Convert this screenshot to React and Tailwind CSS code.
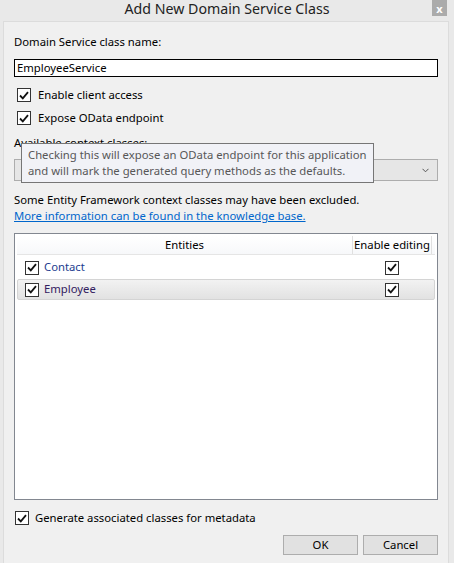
import React from 'react';

const font = { fontFamily: '"Noto Sans", "Open Sans", sans-serif' };

const Check = ({ className = '' }) => (
  <span
    className={`flex h-[14px] w-[14px] shrink-0 items-center justify-center border border-[#333] bg-white ${className}`}
  >
    <svg width="10" height="9" viewBox="0 0 10 9">
      <path d="M1 4.5 L3.8 7.3 L9 1.2" fill="none" stroke="#111" strokeWidth="1.8" />
    </svg>
  </span>
);

const App = () => {
  return (
    <div
      className="relative flex h-[563px] w-[454px] flex-col overflow-hidden whitespace-nowrap bg-[#e9e9e9] text-[11.3px] text-black"
      style={font}
    >
      {/* title bar */}
      <div className="flex h-[21px] shrink-0 justify-center pt-[1px] text-[14.2px] leading-[15px] text-[#222]">
        Add New Domain Service Class
      </div>
      <div className="absolute left-[432px] top-0 flex h-[16px] w-[15px] items-center justify-center bg-[#ababab] text-[11px] font-bold leading-none text-white">
        x
      </div>

      {/* body */}
      <div className="ml-[3px] mr-[5px] flex flex-1 flex-col border-l border-t border-r border-[#dcdcdc] bg-[#f0f0f0] pl-[10px] pr-[10px]">
        <div className="mt-[12px] leading-[16px]">Domain Service class name:</div>
        <div className="mt-[9px] flex h-[18px] items-center border border-black bg-white pl-[2px] leading-none">
          EmployeeService
        </div>

        <div className="mt-[11px] flex items-center gap-[7px] pl-[3px] leading-[14px]">
          <Check />
          <span>Enable client access</span>
        </div>
        <div className="mt-[9px] flex items-center gap-[7px] pl-[3px] leading-[14px]">
          <Check />
          <span>Expose OData endpoint</span>
        </div>

        <div className="relative mt-[11px]">
          <div className="leading-[14px]">Available context classes:</div>
          <div className="mt-[9px] flex h-[22px] items-center justify-end border border-[#adadad] bg-[#e6e6e6] pr-[8px]">
            <svg width="7" height="5" viewBox="0 0 7 5">
              <path d="M0.5 0.8 L3.5 3.8 L6.5 0.8" fill="none" stroke="#555" strokeWidth="1" />
            </svg>
          </div>
          <div className="absolute left-[7px] top-[7px] w-[353px] border border-[#767676] bg-[#f1f2f7] px-[6px] py-[3px] leading-[16px] text-[#575757]">
            <div>Checking this will expose an OData endpoint for this application</div>
            <div>and will mark the generated query methods as the defaults.</div>
          </div>
        </div>

        <div className="mt-[11px] leading-[16px]">
          Some Entity Framework context classes may have been excluded.
        </div>
        <div className="leading-[16px] text-[#0066cc] underline">
          More information can be found in the knowledge base.
        </div>

        {/* entity grid */}
        <div className="mt-[9px] flex h-[267px] flex-col border border-[#828790] bg-white p-[2px]">
          <div className="flex h-[19px] items-stretch border-b border-[#e5e5e5] bg-gradient-to-b from-white to-[#f7f8fa]">
            <div className="flex flex-1 items-center justify-center">Entities</div>
            <div className="flex w-[80px] items-center justify-center border-l border-r border-[#e0e0e0]">
              Enable editing
            </div>
            <div className="w-[3px]" />
          </div>
          <div className="mt-[2px] flex h-[21px] items-center">
            <div className="flex flex-1 items-center gap-[5px] pl-[8px] text-[#1e3d8f]">
              <Check />
              <span>Contact</span>
            </div>
            <div className="flex w-[80px] items-center justify-center">
              <Check />
            </div>
            <div className="w-[3px]" />
          </div>
          <div className="mt-[1px] flex h-[21px] items-center rounded-[2px] border border-[#d4d4d4] bg-gradient-to-b from-[#f2f2f2] to-[#e2e2e2]">
            <div className="flex flex-1 items-center gap-[5px] pl-[7px] text-[#32205f]">
              <Check />
              <span>Employee</span>
            </div>
            <div className="flex w-[80px] items-center justify-center">
              <Check />
            </div>
            <div className="w-[2px]" />
          </div>
        </div>

        <div className="mt-[11px] flex items-center gap-[6px] pl-[1px] leading-[14px]">
          <Check />
          <span>Generate associated classes for metadata</span>
        </div>

        <div className="mt-[10px] flex justify-end gap-[5px]">
          <button className="h-[20px] w-[75px] border border-[#adadad] bg-[#e1e1e1] leading-none">OK</button>
          <button className="h-[20px] w-[75px] border border-[#adadad] bg-[#e1e1e1] leading-none">Cancel</button>
        </div>
      </div>
    </div>
  );
};

export default App;
